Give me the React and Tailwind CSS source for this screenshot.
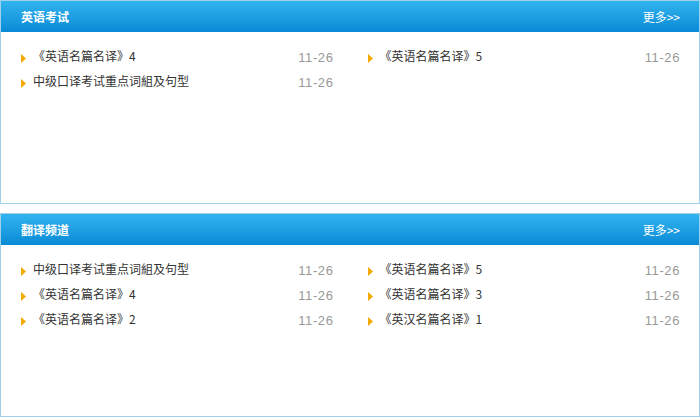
import React from "react";

const panels = [
  {
    title: "英语考试",
    items: [
      { text: "《英语名篇名译》4", date: "11-26" },
      { text: "《英语名篇名译》5", date: "11-26" },
      { text: "中级口译考试重点词組及句型", date: "11-26" },
    ],
  },
  {
    title: "翻译频道",
    items: [
      { text: "中级口译考试重点词組及句型", date: "11-26" },
      { text: "《英语名篇名译》5", date: "11-26" },
      { text: "《英语名篇名译》4", date: "11-26" },
      { text: "《英语名篇名译》3", date: "11-26" },
      { text: "《英语名篇名译》2", date: "11-26" },
      { text: "《英汉名篇名译》1", date: "11-26" },
    ],
  },
];

const Bullet = () => (
  <svg width="5" height="9" viewBox="0 0 5 9" className="mt-[8px] shrink-0">
    <path d="M0 0 L5 4.5 L0 9 Z" fill="#f2a900" />
  </svg>
);

const Panel = ({ title, items }) => (
  <section className="h-[204px] border border-[#9fd2ea] bg-white">
    <div className="flex h-[31px] items-center justify-between bg-gradient-to-b from-[#30b4ef] to-[#078ad6] pl-[20px] pr-[19px]">
      <h2 className="text-[12px] font-bold text-white">{title}</h2>
      <a className="text-[12px] text-white">更多&gt;&gt;</a>
    </div>
    <ul className="grid grid-cols-2 gap-x-[34px] pl-[20px] pr-[19px] pt-[14px]">
      {items.map((item, i) => (
        <li key={i} className="flex h-[25px] items-start gap-[7px]">
          <Bullet />
          <span className="flex-1 text-[12px] leading-[20px] text-[#333]">
            {item.text}
          </span>
          <span className="font-['Liberation_Sans'] text-[13px] leading-[22px] tracking-[0.6px] text-[#999] pt-[1px]">
            {item.date}
          </span>
        </li>
      ))}
    </ul>
  </section>
);

export default function App() {
  return (
    <main className="flex w-[700px] flex-col gap-[9px] bg-white font-['Noto_Sans_CJK_SC',sans-serif]">
      {panels.map((p) => (
        <Panel key={p.title} {...p} />
      ))}
    </main>
  );
}
